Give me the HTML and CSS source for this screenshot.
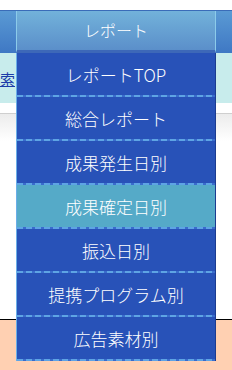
FILE: index.html
```html
<!DOCTYPE html>
<html lang="ja">
<head>
    <meta charset="UTF-8">
    <meta name="viewport" content="width=device-width, initial-scale=1.0">
    <title>レポート</title>
    <link rel="stylesheet" href="styles.css">
</head>
<body>
    <div class="top-strip"></div>

    <div class="navbar">
        <div class="nav-side"></div>
        <div class="nav-btn">レポート</div>
        <div class="nav-side"></div>

        <ul class="dropdown">
            <li>レポートTOP</li>
            <li>総合レポート</li>
            <li>成果発生日別</li>
            <li class="active">成果確定日別</li>
            <li>振込日別</li>
            <li>提携プログラム別</li>
            <li>広告素材別</li>
        </ul>
    </div>

    <div class="content">
        <div class="search-row">
            <a href="#" class="search-link">索</a>
        </div>
        <div class="spacer"></div>
        <div class="grey-band"></div>
        <div class="blank"></div>
        <div class="footer"></div>
    </div>
</body>
</html>
```

FILE: styles.css
```css
body {
    margin: 0;
    padding: 0;
    width: 232px;
    height: 370px;
    overflow: hidden;
    background: #fff;
    font-family: "Noto Sans CJK JP", "Noto Sans", sans-serif;
}

.top-strip {
    height: 10px;
    background: #fff;
}

.navbar {
    position: relative;
    display: flex;
    height: 43px;
    border-top: 1px solid #3a6cb8;
    box-sizing: border-box;
}

.nav-side {
    width: 16px;
    background: linear-gradient(#5a9ad4, #3f78c4);
}

.nav-btn {
    width: 200px;
    box-sizing: border-box;
    border-left: 1px solid #8ccbea;
    border-right: 1px solid #8ccbea;
    border-bottom: 3px solid #3d68b8;
    background: linear-gradient(#72b2da, #5b8fca);
    color: #fff;
    font-size: 16px;
    font-weight: 300;
    text-align: center;
    line-height: 38px;
}

.dropdown {
    position: absolute;
    top: 42px;
    left: 16px;
    width: 200px;
    margin: 0;
    padding: 0;
    list-style: none;
    background: #2852b8;
    border-left: 1px solid #6aaee8;
    border-right: 1px solid #1c3c90;
    box-sizing: border-box;
}

.dropdown li {
    position: relative;
    height: 44px;
    line-height: 44px;
    text-align: center;
    color: #fff;
    font-size: 17px;
    font-weight: 300;
}

.dropdown li::after {
    content: "";
    position: absolute;
    left: 0;
    right: 0;
    bottom: 0;
    height: 2px;
    background: repeating-linear-gradient(90deg, #5ea4e4 0 6px, #3a6ccc 6px 9px);
}

.dropdown li.active {
    background: #55aac8;
}

.search-row {
    height: 50px;
    background: #c8ecec;
    padding-top: 13px;
    box-sizing: border-box;
}

.search-link {
    color: #1c3ca8;
    font-size: 15px;
}

.spacer {
    height: 10px;
}

.grey-band {
    height: 27px;
    border-top: 1px solid #cfcfcf;
    background: linear-gradient(#ececec, #fff);
}

.blank {
    height: 178px;
}

.footer {
    height: 50px;
    background: #ffd0b2;
    border-top: 1px solid #000;
    border-bottom: 1px solid #000;
}
```
